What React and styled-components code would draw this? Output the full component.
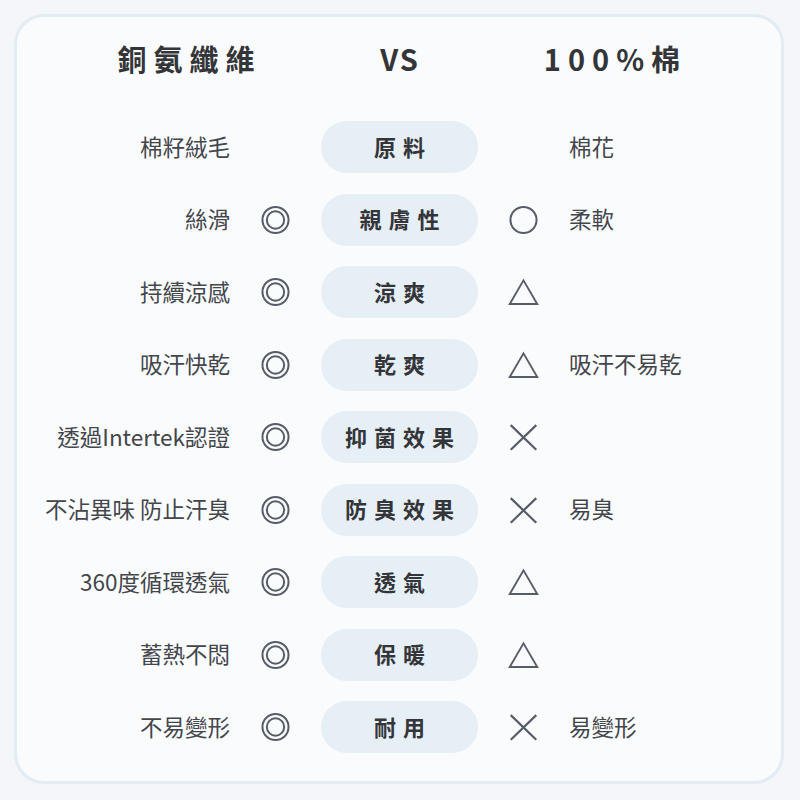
import React from 'react';
import styled, { createGlobalStyle } from 'styled-components';

const GlobalStyle = createGlobalStyle`
  html, body {
    margin: 0;
    background: #f4f6f9;
  }
  body {
    padding: 14px;
    font-family: "Noto Sans CJK TC", "Noto Sans", sans-serif;
    color: #3a3d42;
  }
`;

const Card = styled.div`
  box-sizing: border-box;
  width: 770px;
  height: 770px;
  border: 3px solid #e3ebf3;
  border-radius: 30px;
  background: #fafbfd;
  padding-top: 20px;
`;

const Header = styled.div`
  display: grid;
  grid-template-columns: repeat(3, 213px);
  justify-content: center;
  height: 42px;
  align-items: center;
  margin-bottom: 42px;
`;

const Title = styled.div`
  text-align: center;
  font-size: 29px;
  font-weight: 700;
  letter-spacing: ${({ $spacing }) => $spacing}px;
  padding-left: ${({ $spacing }) => $spacing}px;
  color: #333538;
  line-height: 42px;
`;

const Table = styled.div`
  display: grid;
  grid-template-columns: 1fr 31px 157px 31px 1fr;
  grid-auto-rows: 52px;
  column-gap: 30px;
  row-gap: 20.5px;
  align-items: center;
  padding-left: 1px;
`;

const Cell = styled.div`
  font-size: 22.5px;
  color: #43464b;
  white-space: nowrap;
  padding-bottom: 3px;
  text-align: ${({ $align }) => $align};
`;

const Pill = styled.div`
  height: 52px;
  box-sizing: border-box;
  padding-bottom: 3px;
  border-radius: 26px;
  background: #e6eef6;
  display: flex;
  align-items: center;
  justify-content: center;
  font-size: 22px;
  font-weight: 700;
  letter-spacing: 7px;
  padding-left: 7px;
  color: #333538;
`;

const IconBox = styled.div`
  display: flex;
  align-items: center;
  justify-content: center;
`;

const stroke = '#575d68';

const Mark = ({ type }) => {
  if (type === 'double') {
    return (
      <svg width="34" height="34" viewBox="0 0 34 34">
        <circle cx="17" cy="17" r="14.3" fill="none" stroke={stroke} strokeWidth="2.2" />
        <circle cx="17" cy="17" r="9.5" fill="none" stroke={stroke} strokeWidth="2.2" />
      </svg>
    );
  }
  if (type === 'circle') {
    return (
      <svg width="34" height="34" viewBox="0 0 34 34">
        <circle cx="17" cy="17" r="14.3" fill="none" stroke={stroke} strokeWidth="2.2" />
      </svg>
    );
  }
  if (type === 'tri') {
    return (
      <svg width="36" height="34" viewBox="0 0 36 34">
        <polygon points="18,3.5 34,31 2,31" fill="none" stroke={stroke} strokeWidth="2.2" />
      </svg>
    );
  }
  if (type === 'cross') {
    return (
      <svg width="34" height="34" viewBox="0 0 34 34">
        <path d="M3 4 L31 31 M31 4 L3 31" fill="none" stroke={stroke} strokeWidth="2.4" />
      </svg>
    );
  }
  return null;
};

const rows = [
  { left: '棉籽絨毛', lm: null, label: '原料', rm: null, right: '棉花' },
  { left: '絲滑', lm: 'double', label: '親膚性', rm: 'circle', right: '柔軟' },
  { left: '持續涼感', lm: 'double', label: '涼爽', rm: 'tri', right: '' },
  { left: '吸汗快乾', lm: 'double', label: '乾爽', rm: 'tri', right: '吸汗不易乾' },
  { left: '透過Intertek認證', lm: 'double', label: '抑菌效果', rm: 'cross', right: '' },
  { left: '不沾異味 防止汗臭', lm: 'double', label: '防臭效果', rm: 'cross', right: '易臭' },
  { left: '360度循環透氣', lm: 'double', label: '透氣', rm: 'tri', right: '' },
  { left: '蓄熱不悶', lm: 'double', label: '保暖', rm: 'tri', right: '' },
  { left: '不易變形', lm: 'double', label: '耐用', rm: 'cross', right: '易變形' },
];

const App = () => {
  return (
    <>
      <GlobalStyle />
      <Card>
        <Header>
          <Title $spacing={7}>銅氨纖維</Title>
          <Title $spacing={2}>VS</Title>
          <Title $spacing={7}>100%棉</Title>
        </Header>

        <Table>
          {rows.map((row) => (
            <React.Fragment key={row.label}>
              <Cell $align="right">{row.left}</Cell>
              <IconBox>{row.lm && <Mark type={row.lm} />}</IconBox>
              <Pill>{row.label}</Pill>
              <IconBox>{row.rm && <Mark type={row.rm} />}</IconBox>
              <Cell $align="left">{row.right}</Cell>
            </React.Fragment>
          ))}
        </Table>
      </Card>
    </>
  );
};

export default App;
